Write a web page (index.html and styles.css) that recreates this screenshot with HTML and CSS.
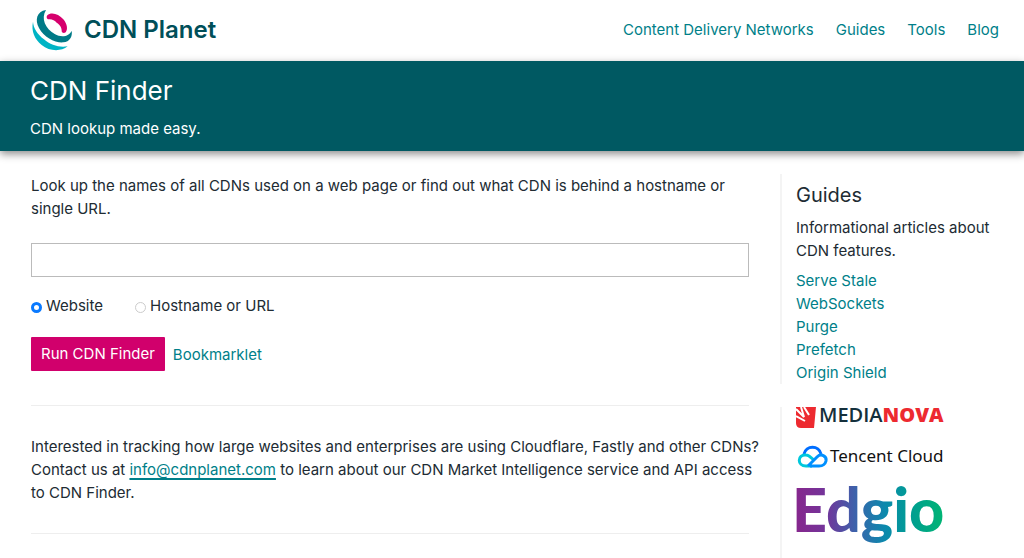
FILE: index.html
```html
<!DOCTYPE html>
<html lang="en">
  <head>
    <meta charset="utf-8">
    <meta name="viewport" content="width=device-width, initial-scale=1">
    <title>CDN Finder - CDN Planet</title>
    <link rel="stylesheet" href="styles.css">
  </head>
  <body>
    <header class="site-header">
      <a href="/" class="logo">
        <svg class="logo-icon" viewBox="0 0 138 144" aria-hidden="true">
          <path fill="#00b4c5" d="M9 47C3 75 14 100 35 117C58 136 92 138 113 121C88 125 62 118 42 100C22 84 10 66 9 47Z"/>
          <path fill="#007a87" d="M48 12C20 16 14 42 27 66C42 94 75 111 100 109C119 107 128 92 125 74C118 91 95 96 74 84C46 68 32 38 48 12Z"/>
          <path fill="#d6006d" d="M52 28C62 17 86 22 100 40C112 55 114 70 107 79C102 83 96 81 95 76C96 66 90 56 80 50C74 42 64 38 54 40C49 38 49 31 52 28Z"/>
        </svg>
        <span>CDN Planet</span>
      </a>
      <nav class="site-nav">
        <a href="/cdns/">Content Delivery Networks</a>
        <a href="/guides/">Guides</a>
        <a href="/tools/">Tools</a>
        <a href="/blog/">Blog</a>
      </nav>
    </header>

    <div class="banner">
      <h1>CDN Finder</h1>
      <p>CDN lookup made easy.</p>
    </div>

    <div class="content">
      <main>
        <p>Look up the names of all CDNs used on a web page or find out what CDN is behind a hostname or single URL.</p>
        <form class="finder">
          <input type="text" class="finder-input" aria-label="Website, hostname or URL">
          <div class="finder-types">
            <label><input type="radio" name="type" checked>Website</label>
            <label><input type="radio" name="type">Hostname or URL</label>
          </div>
          <div class="finder-actions">
            <button type="button" class="btn">Run CDN Finder</button>
            <a href="#">Bookmarklet</a>
          </div>
        </form>
        <hr>
        <p class="note">
          Interested in tracking how large websites and enterprises are using Cloudflare, Fastly and other CDNs?
          Contact us at <a href="mailto:info@cdnplanet.com" class="mail">info@cdnplanet.com</a> to learn about our
          CDN Market Intelligence service and API access to CDN Finder.
        </p>
        <hr>
      </main>

      <aside>
        <section class="guides">
          <h2>Guides</h2>
          <p>Informational articles about CDN features.</p>
          <ul>
            <li><a href="#">Serve Stale</a></li>
            <li><a href="#">WebSockets</a></li>
            <li><a href="#">Purge</a></li>
            <li><a href="#">Prefetch</a></li>
            <li><a href="#">Origin Shield</a></li>
          </ul>
        </section>

        <section class="sponsors">
          <a href="#">
            <svg width="160" height="22" viewBox="0 0 160 22">
              <path fill="#ed2a30" d="M0 0H20L18 21H5Q0 21 0 16Z"/>
              <path stroke="#fff" stroke-width="2" fill="none" d="M0 2L8 10L5 0M0 9L9 14M8 0L13 8"/>
              <text x="23" y="15" class="medianova">MEDIA<tspan class="nova">NOVA</tspan></text>
            </svg>
          </a>
          <a href="#">
            <svg width="160" height="24" viewBox="0 0 160 24">
              <g fill="none" stroke-width="3">
                <path stroke="#006eff" d="M8 9C10 0 23 0 25 9"/>
                <path stroke="#00c8dc" d="M16 21H10C1 21 1 9 10 10C13 10 15 13 18 15"/>
                <path stroke="#0090ff" d="M12 21L21 12C25 8 31 11 30 16C29 20 26 21 23 21H14"/>
              </g>
              <text x="34" y="17" class="tencent">Tencent Cloud</text>
            </svg>
          </a>
          <a href="#">
            <svg width="160" height="64" viewBox="0 0 160 64">
              <defs>
                <linearGradient id="edgio" x1="0" y1="0" x2="148" y2="0" gradientUnits="userSpaceOnUse">
                  <stop offset="0" stop-color="#86278d"/>
                  <stop offset="0.2" stop-color="#73349a"/>
                  <stop offset="0.4" stop-color="#3d62ab"/>
                  <stop offset="0.6" stop-color="#0b89ad"/>
                  <stop offset="0.78" stop-color="#009e91"/>
                  <stop offset="1" stop-color="#00b573"/>
                </linearGradient>
              </defs>
              <text x="-4" y="47" class="edgio" fill="url(#edgio)">Edgio</text>
            </svg>
          </a>
        </section>
      </aside>
    </div>
  </body>
</html>
```
FILE: styles.css
```css
* {
  box-sizing: border-box;
}
body {
  margin: 0;
  font-family: Inter, "Liberation Sans", sans-serif;
  font-size: 15px;
  line-height: 23px;
  color: #212b33;
  background-color: #fff;
}
h1,
h2,
p,
ul {
  margin: 0;
  padding: 0;
  font-weight: 400;
}
a {
  color: #007f89;
  text-decoration: none;
}

/* header */
.site-header {
  display: flex;
  justify-content: space-between;
  align-items: center;
  height: 61px;
  padding: 0 25px 2px 30px;
}
.logo {
  display: flex;
  align-items: center;
  gap: 8px;
  font-size: 24px;
  font-weight: 600;
  color: #004f59;
}
.logo-icon {
  width: 46px;
  height: 48px;
}
.site-nav {
  display: flex;
  gap: 22px;
}

/* page title */
.banner {
  height: 90px;
  padding: 14px 30px 0;
  color: #fff;
  background-color: #005962;
  box-shadow: 0 3px 8px rgba(0, 0, 0, 0.45);
}
.banner h1 {
  margin-bottom: 11px;
  font-size: 26px;
  line-height: 31px;
}

.content {
  display: grid;
  grid-template-columns: 1fr 213px;
  gap: 17px;
  padding: 23px 31px 0;
}
hr {
  margin: 0 14px 0 0;
  border: none;
  border-top: 1px solid #eee;
}

/* finder form */
.finder {
  margin-right: 14px;
  padding: 23px 0 34px;
}
.finder-input {
  display: block;
  width: 100%;
  height: 34px;
  padding: 0 8px;
  border: 1px solid #bbb;
  font: inherit;
}
.finder-types {
  display: flex;
  gap: 32px;
  padding: 17px 0 20px;
}
.finder-types label {
  display: flex;
  align-items: center;
  gap: 4px;
}
.finder-types input {
  appearance: none;
  width: 11px;
  height: 11px;
  margin: 3px 0 0;
  border: 1px solid #ccc;
  border-radius: 50%;
}
.finder-types input:checked {
  border: 3px solid #0a7aff;
}
.finder-actions {
  display: flex;
  align-items: center;
  gap: 8px;
}
.btn {
  height: 34px;
  padding: 0 10px 1px;
  border: none;
  border-radius: 1px;
  font: inherit;
  color: #fff;
  background-color: #d1006c;
  cursor: pointer;
}
.note {
  padding: 29px 0;
}
.mail {
  text-decoration: underline 2px;
  text-underline-offset: 3px;
  text-decoration-skip-ink: none;
}

/* sidebar */
aside section {
  padding-left: 14px;
  border-left: 2px solid #f4f4f4;
}
.guides {
  margin-bottom: 23px;
  padding-top: 8px;
}
.guides h2 {
  margin-bottom: 8px;
  font-size: 20px;
  line-height: 26px;
}
.guides ul {
  margin-top: 7px;
  list-style: none;
}
.sponsors {
  display: flex;
  flex-direction: column;
  gap: 16px;
  padding-bottom: 24px;
}
.sponsors svg {
  display: block;
}
.medianova {
  font: 600 20px "Open Sans", sans-serif;
  fill: #14303c;
}
.nova {
  font-weight: 800;
  fill: #ed2a30;
}
.tencent {
  font: 400 17px "Noto Sans", sans-serif;
  fill: #111;
}
.edgio {
  font: 900 61px Lato, sans-serif;
}
```
